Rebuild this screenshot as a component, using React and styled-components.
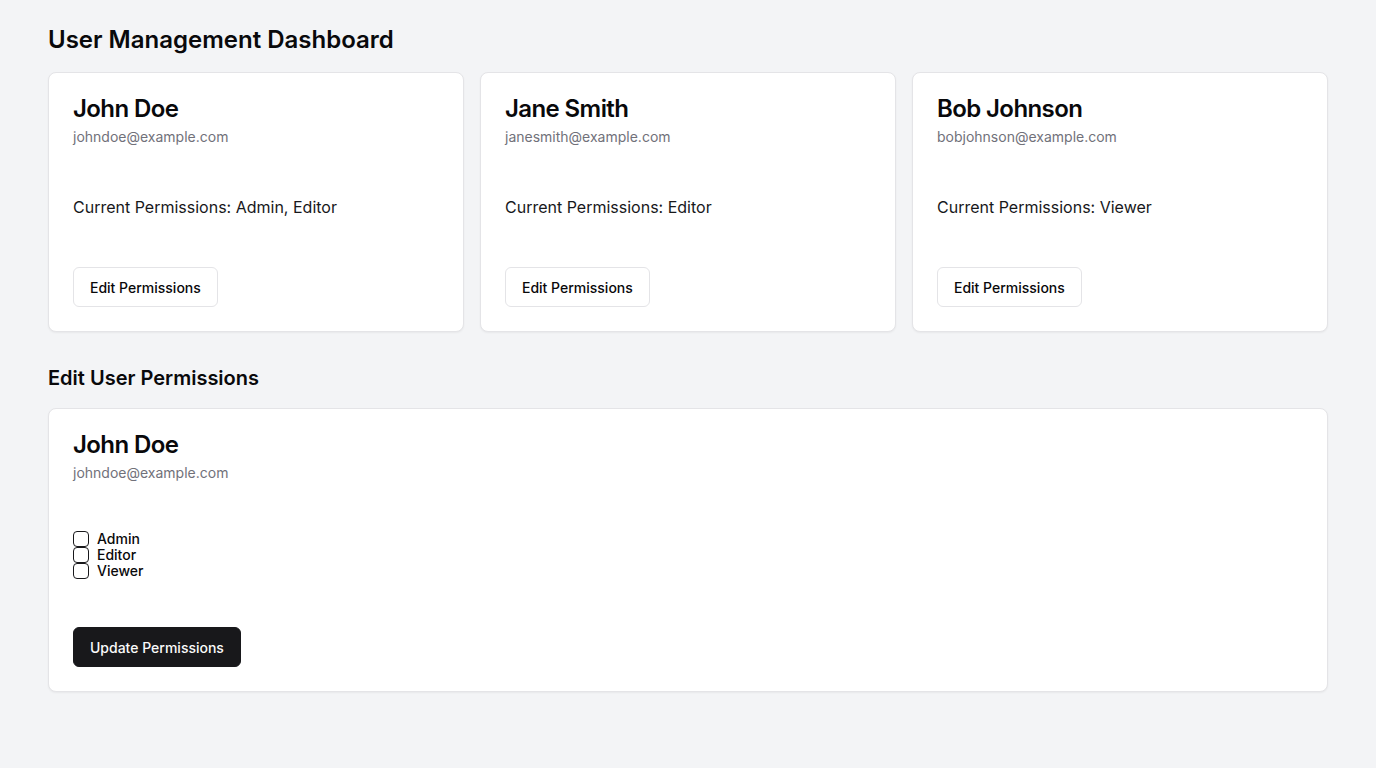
import styled, { createGlobalStyle } from 'styled-components';

const GlobalStyle = createGlobalStyle`
  html, body {
    margin: 0;
    padding: 0;
    background: #f3f4f6;
    font-family: Inter, "Liberation Sans", sans-serif;
    color: #09090b;
  }
  * {
    box-sizing: border-box;
  }
`;

const Page = styled.div`
  min-height: 100vh;
  padding: 24px 48px;
`;

const PageTitle = styled.h1`
  margin: 0 0 16px;
  font-size: 24px;
  line-height: 32px;
  font-weight: 600;
`;

const SectionTitle = styled.h2`
  margin: 32px 0 16px;
  font-size: 20px;
  line-height: 28px;
  font-weight: 600;
`;

const Grid = styled.div`
  display: grid;
  grid-template-columns: repeat(3, 1fr);
  gap: 16px;
`;

const Card = styled.div`
  background: #fff;
  border: 1px solid #e4e4e7;
  border-radius: 8px;
  box-shadow: 0 1px 2px rgba(0, 0, 0, 0.05);
`;

const Header = styled.div`
  display: flex;
  flex-direction: column;
  gap: 6px;
  padding: 24px;
`;

const Name = styled.h3`
  margin: 0;
  font-size: 24px;
  line-height: 1;
  font-weight: 600;
  letter-spacing: -0.025em;
`;

const Email = styled.p`
  margin: 0;
  font-size: 14px;
  line-height: 20px;
  color: #71717a;
`;

const Content = styled.div`
  padding: 24px;
`;

const Text = styled.p`
  margin: 0;
  font-size: 16px;
  line-height: 24px;
  color: #18181b;
`;

const Footer = styled.div`
  display: flex;
  align-items: center;
  padding: 24px;
`;

const Button = styled.button`
  height: 40px;
  padding: 0 16px;
  border-radius: 6px;
  font-family: inherit;
  font-size: 14px;
  font-weight: 500;
  cursor: pointer;
  border: 1px solid ${({ $primary }) => ($primary ? '#18181b' : '#e4e4e7')};
  background: ${({ $primary }) => ($primary ? '#18181b' : '#fff')};
  color: ${({ $primary }) => ($primary ? '#fafafa' : '#09090b')};
`;

const CheckRow = styled.label`
  display: flex;
  align-items: center;
  gap: 8px;
  height: 16px;
  font-size: 14px;
  font-weight: 500;
  line-height: 16px;
`;

const Box = styled.span`
  width: 16px;
  height: 16px;
  border: 1px solid #18181b;
  border-radius: 4px;
  background: #fff;
`;

const users = [
  { name: 'John Doe', email: 'johndoe@example.com', perms: 'Admin, Editor' },
  { name: 'Jane Smith', email: 'janesmith@example.com', perms: 'Editor' },
  { name: 'Bob Johnson', email: 'bobjohnson@example.com', perms: 'Viewer' },
];

export default function App() {
  return (
    <>
      <GlobalStyle />
      <Page>
        <PageTitle>User Management Dashboard</PageTitle>
        <Grid>
          {users.map((u) => (
            <Card key={u.email}>
              <Header>
                <Name>{u.name}</Name>
                <Email>{u.email}</Email>
              </Header>
              <Content>
                <Text>Current Permissions: {u.perms}</Text>
              </Content>
              <Footer>
                <Button>Edit Permissions</Button>
              </Footer>
            </Card>
          ))}
        </Grid>

        <SectionTitle>Edit User Permissions</SectionTitle>
        <Card>
          <Header>
            <Name>John Doe</Name>
            <Email>johndoe@example.com</Email>
          </Header>
          <Content>
            {['Admin', 'Editor', 'Viewer'].map((p) => (
              <CheckRow key={p}>
                <Box />
                {p}
              </CheckRow>
            ))}
          </Content>
          <Footer>
            <Button $primary>Update Permissions</Button>
          </Footer>
        </Card>
      </Page>
    </>
  );
}
